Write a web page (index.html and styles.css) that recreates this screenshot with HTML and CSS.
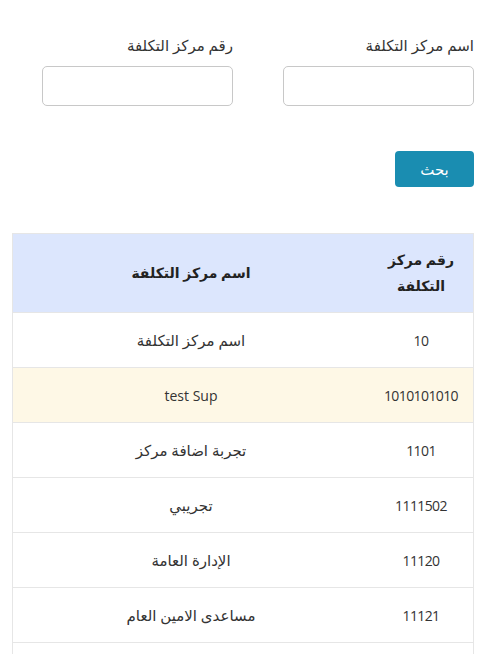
FILE: index.html
```html
<!DOCTYPE html>
<html lang="ar" dir="rtl">
<head>
<meta charset="utf-8">
<link rel="stylesheet" href="styles.css">
</head>
<body>
<div class="page">
  <div class="filters">
    <div class="field">
      <label class="label">اسم مركز التكلفة</label>
      <input class="input" type="text">
    </div>
    <div class="field">
      <label class="label">رقم مركز التكلفة</label>
      <input class="input" type="text">
    </div>
  </div>
  <div class="actions">
    <button class="btn">بحث</button>
  </div>
  <table class="grid">
    <thead>
      <tr><th class="num">رقم مركز<br>التكلفة</th><th class="name">اسم مركز التكلفة</th></tr>
    </thead>
    <tbody>
      <tr><td class="num">10</td><td class="name ar">اسم مركز التكلفة</td></tr>
      <tr class="hl"><td class="num">1010101010</td><td class="name">test Sup</td></tr>
      <tr><td class="num">1101</td><td class="name ar">تجربة اضافة مركز</td></tr>
      <tr><td class="num">1111502</td><td class="name ar">تجريبي</td></tr>
      <tr><td class="num">11120</td><td class="name ar">الإدارة العامة</td></tr>
      <tr><td class="num">11121</td><td class="name ar">مساعدى الامين العام</td></tr>
      <tr class="last"><td class="num"></td><td class="name"></td></tr>
    </tbody>
  </table>
</div>
</body>
</html>
```
FILE: styles.css
```css
html, body { margin: 0; padding: 0; background: #fff; }
body {
  font-family: "Open Sans", "DejaVu Sans", "Noto Sans Arabic", sans-serif;
  font-size: 14px;
  color: #333;
  overflow: hidden;
  height: 654px;
}
.page { padding: 33px 18px 0 18px; }
.filters {
  display: grid;
  grid-template-columns: 191px 191px;
  column-gap: 50px;
  justify-content: start;
}
.field { display: flex; flex-direction: column; }
.label { font-size: 15px; line-height: 24px; color: #333; margin-bottom: 9px; }
.input {
  height: 40px;
  box-sizing: border-box;
  border: 1px solid #c8c8c8;
  border-radius: 5px;
  background: #fff;
  margin: 0;
}
.actions { margin-top: 45px; display: flex; }
.btn {
  width: 79px;
  height: 36px;
  background: #1a8db1;
  color: #fff;
  border: none;
  border-radius: 4px;
  font-family: inherit;
  font-size: 15px;
  padding: 0;
}
.grid {
  margin-top: 46px;
  width: 462px;
  border-collapse: collapse;
  border-left: 1px solid #e6e6e6;
  border-right: 1px solid #e6e6e6;
}
.grid th, .grid td {
  border-top: 1px solid #e6e6e6;
  border-bottom: 1px solid #e6e6e6;
  text-align: center;
  vertical-align: middle;
}
.grid th {
  background: #dce6fd;
  font-weight: bold;
  color: #222;
  height: 78px;
  line-height: 26px;
  padding: 0;
}
.grid td { height: 54px; padding: 0; color: #333; }
.grid td.num { font-size: 14px; letter-spacing: -0.6px; }
.grid td.ar { font-size: 15px; }
.grid .num { width: 104px; }
.grid tr.hl td { background: #fef8e6; }
```
